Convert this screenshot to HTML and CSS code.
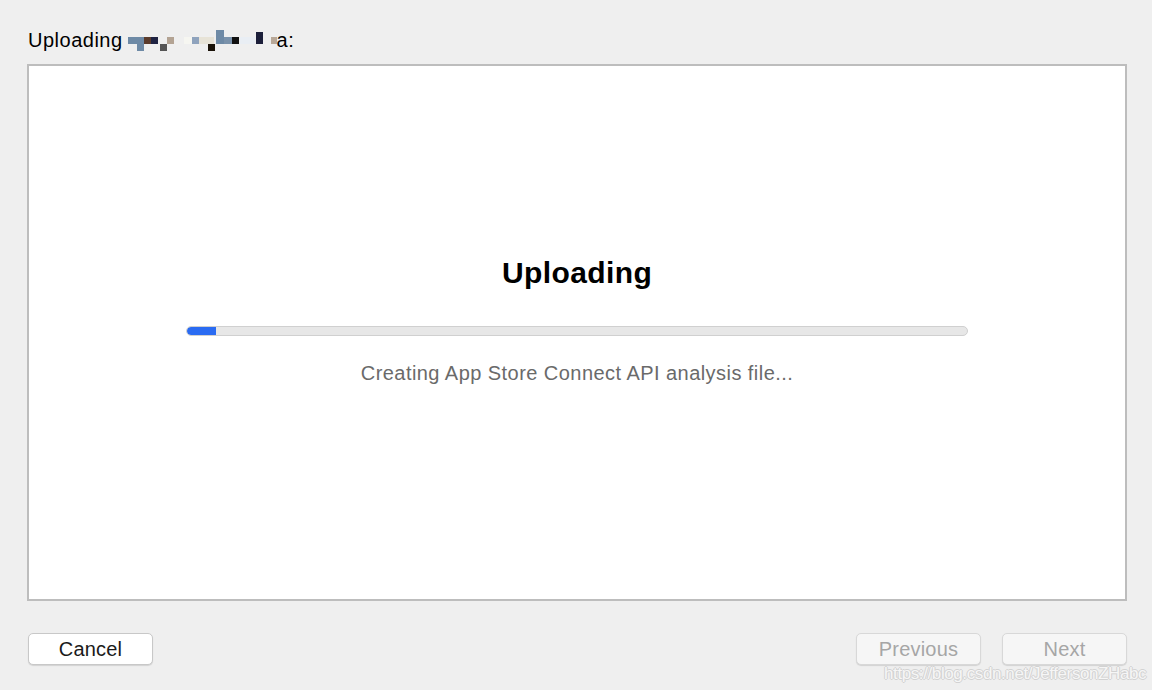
FILE: index.html
```html
<!DOCTYPE html>
<html>
<head>
<meta charset="utf-8">
<link rel="stylesheet" href="styles.css">
</head>
<body>
<div class="window">
  <div class="header">
    <span class="header-text">Uploading</span>
    <svg class="pixels" width="154" height="26" viewBox="0 0 154 26">
      <rect x="5" y="9" width="16" height="7" fill="#6e8aa6"/>
      <rect x="14" y="16" width="7" height="7" fill="#6e8aa6"/>
      <rect x="21" y="9" width="7" height="7" fill="#5b3b2b"/>
      <rect x="28" y="9" width="7" height="7" fill="#1f2342"/>
      <rect x="37" y="16" width="7" height="7" fill="#555555"/>
      <rect x="44" y="9" width="7" height="7" fill="#b3a393"/>
      <rect x="61" y="9" width="8" height="7" fill="#f6f6f1"/>
      <rect x="69" y="9" width="7" height="7" fill="#8fa3bd"/>
      <rect x="76" y="9" width="15" height="7" fill="#e7e3d7"/>
      <rect x="85" y="16" width="7" height="7" fill="#1a1208"/>
      <rect x="93" y="2" width="8" height="14" fill="#6e8aa6"/>
      <rect x="101" y="9" width="8" height="7" fill="#7a92ab"/>
      <rect x="109" y="9" width="7" height="7" fill="#111111"/>
      <rect x="117" y="9" width="15" height="7" fill="#e9eef4"/>
      <rect x="133" y="4" width="7" height="12" fill="#1c1f3a"/>
      <rect x="148" y="9" width="6" height="7" fill="#b8a898"/>
    </svg><span class="header-text">a:</span>
  </div>
  <div class="panel">
    <div class="progress-area">
      <h1 class="title">Uploading</h1>
      <div class="bar"><div class="bar-fill" style="width:29px"></div></div>
      <p class="status">Creating App Store Connect API analysis file...</p>
    </div>
  </div>
  <div class="footer">
    <button class="btn">Cancel</button>
    <div class="nav">
      <button class="btn disabled">Previous</button>
      <button class="btn disabled">Next</button>
    </div>
  </div>
  <div class="watermark">https://blog.csdn.net/JeffersonZHabc</div>
</div>
</body>
</html>
```
FILE: styles.css
```css
html, body {
  margin: 0;
  padding: 0;
  background: #efefef;
}
.window {
  position: relative;
  width: 1152px;
  height: 690px;
  box-sizing: border-box;
  padding: 27px 25px 0 27px;
  font-family: "Liberation Sans", Arial, sans-serif;
  color: #000;
}
.header {
  display: flex;
  align-items: center;
  height: 26px;
  padding-left: 1px;
  margin-bottom: 11px;
}
.header-text {
  font-size: 20px;
  line-height: 26px;
  letter-spacing: 0.5px;
}
.pixels {
  display: block;
  position: relative;
  top: 1px;
}
.panel {
  height: 537px;
  box-sizing: border-box;
  background: #fff;
  border: 2px solid #bdbdbd;
  display: flex;
  flex-direction: column;
  align-items: center;
}
.progress-area {
  width: 782px;
  padding-top: 187px;
  display: flex;
  flex-direction: column;
  align-items: center;
}
.title {
  margin: 0;
  font-size: 30px;
  line-height: 40px;
  font-weight: bold;
  letter-spacing: 0.4px;
}
.bar {
  margin-top: 33px;
  width: 782px;
  height: 10px;
  box-sizing: border-box;
  background: #e7e7e7;
  border: 1px solid #d0d0d0;
  border-radius: 5px;
  overflow: hidden;
}
.bar-fill {
  height: 100%;
  background: #2a6bf2;
  border-radius: 5px 0 0 5px;
}
.status {
  margin: 24px 0 0;
  font-size: 20px;
  line-height: 26px;
  color: #6a6a6a;
  letter-spacing: 0.45px;
}
.footer {
  display: flex;
  justify-content: space-between;
  align-items: center;
  margin-top: 32px;
  padding-left: 1px;
}
.nav {
  display: flex;
  gap: 21px;
}
.btn {
  width: 125px;
  height: 32px;
  box-sizing: border-box;
  background: #fff;
  border: 1px solid #c8c8c8;
  border-radius: 5px;
  box-shadow: 0 1px 1px rgba(0,0,0,0.12);
  font-family: "Liberation Sans", Arial, sans-serif;
  font-size: 20px;
  color: #1a1a1a;
  padding: 0;
  letter-spacing: 0.2px;
}
.btn.disabled {
  background: #f6f6f6;
  color: #a6a6a6;
  border-color: #d8d8d8;
}
.watermark {
  position: absolute;
  left: 884px;
  top: 663px;
  font-size: 17px;
  line-height: 22px;
  color: #f6f6f6;
  letter-spacing: -0.4px;
  text-shadow: 1px 0 0 #d2d2d2, -1px 0 0 #d2d2d2, 0 1px 0 #d2d2d2, 0 -1px 0 #d2d2d2;
}
```
